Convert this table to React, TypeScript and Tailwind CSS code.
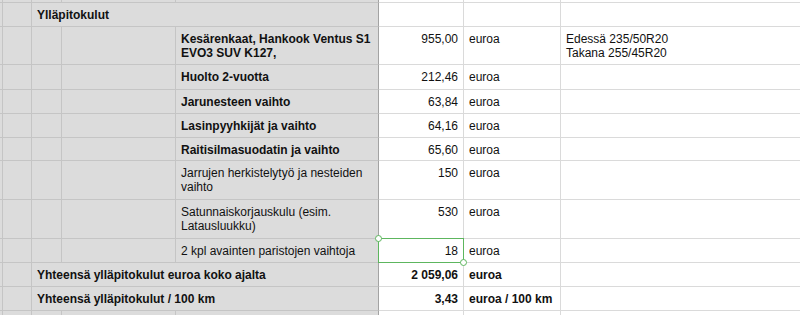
import React from 'react';

type Item = {
  label: string[];
  bold?: boolean;
  value: string;
  note?: string[];
  h: string;
  selected?: boolean;
};

const items: Item[] = [
  { label: ['Kesärenkaat, Hankook Ventus S1', 'EVO3 SUV K127,'], bold: true, value: '955,00', note: ['Edessä 235/50R20', 'Takana 255/45R20'], h: 'h-[38px]' },
  { label: ['Huolto 2-vuotta'], bold: true, value: '212,46', h: 'h-[25px]' },
  { label: ['Jarunesteen vaihto'], bold: true, value: '63,84', h: 'h-[24px]' },
  { label: ['Lasinpyyhkijät ja vaihto'], bold: true, value: '64,16', h: 'h-[24px]' },
  { label: ['Raitisilmasuodatin ja vaihto'], bold: true, value: '65,60', h: 'h-[23px]' },
  { label: ['Jarrujen herkistelytyö ja nesteiden', 'vaihto'], value: '150', h: 'h-[39px]' },
  { label: ['Satunnaiskorjauskulu (esim.', 'Latausluukku)'], value: '530', h: 'h-[39px]' },
  { label: ['2 kpl avainten paristojen vaihtoja'], value: '18', h: 'h-[24px]', selected: true },
];

// gray side cells
const g = 'bg-[#dcdcdc] border-r border-b border-[#c5c5c5]';
const gEdge = 'bg-[#dcdcdc] border-r border-b border-r-[#a3a3a3] border-b-[#c5c5c5]';
const w = 'bg-white border-r border-b border-[#dadada]';
const txt = 'pl-[5px] pr-[5px] pt-[5px] leading-[14px] whitespace-nowrap';

function Row({ h, children }: { h: string; children: React.ReactNode }) {
  return (
    <div className={`grid grid-cols-[3px_29px_30px_114px_203px_85px_97px_1fr] ${h}`}>
      {children}
    </div>
  );
}

function Handle({ className }: { className: string }) {
  return (
    <span
      className={`absolute w-[7px] h-[7px] rounded-full bg-white border border-[#5db65e] ${className}`}
    />
  );
}

export default function App() {
  return (
    <div
      className="w-[800px] h-[315px] overflow-hidden bg-white text-[12px] text-[#111]"
      style={{ fontFamily: '"Liberation Sans", Arial, sans-serif' }}
    >
      <Row h="h-[3px]">
        <div className={g} />
        <div className={g} />
        <div className={g} />
        <div className={g} />
        <div className={gEdge} />
        <div className={w} />
        <div className={w} />
        <div className="bg-white border-b border-[#dadada]" />
      </Row>

      <Row h="h-[24px]">
        <div className={g} />
        <div className={g} />
        <div className={`${gEdge} col-span-3 ${txt} font-bold`}>Ylläpitokulut</div>
        <div className={w} />
        <div className={w} />
        <div className="bg-white border-b border-[#dadada]" />
      </Row>

      {items.map((it, i) => (
        <Row key={i} h={it.h}>
          <div className={g} />
          <div className={g} />
          <div className={g} />
          <div className={g} />
          <div className={`${gEdge} ${txt} ${it.bold ? 'font-bold' : ''}`}>
            {it.label.map((l, j) => (
              <div key={j}>{l}</div>
            ))}
          </div>
          <div className={`${w} ${txt} text-right relative`}>
            {it.value}
            {it.selected && (
              <div className="absolute left-[-1px] top-[-1px] right-[-1px] bottom-[-1px] border border-[#5db65e]">
                <Handle className="left-[-4px] top-[-4px]" />
                <Handle className="right-[-4px] bottom-[-4px]" />
              </div>
            )}
          </div>
          <div className={`${w} ${txt}`}>euroa</div>
          <div className={`bg-white border-b border-[#dadada] ${txt}`}>
            {it.note?.map((n, j) => (
              <div key={j}>{n}</div>
            ))}
          </div>
        </Row>
      ))}

      <Row h="h-[24px]">
        <div className={g} />
        <div className={g} />
        <div className={`${gEdge} col-span-3 ${txt} font-bold`}>Yhteensä ylläpitokulut euroa koko ajalta</div>
        <div className={`${w} ${txt} text-right font-bold`}>2 059,06</div>
        <div className={`${w} ${txt} font-bold`}>euroa</div>
        <div className="bg-white border-b border-[#dadada]" />
      </Row>

      <Row h="h-[24px]">
        <div className={g} />
        <div className={g} />
        <div className={`${gEdge} col-span-3 ${txt} font-bold`}>Yhteensä ylläpitokulut / 100 km</div>
        <div className={`${w} ${txt} text-right font-bold`}>3,43</div>
        <div className={`${w} ${txt} font-bold`}>euroa / 100 km</div>
        <div className="bg-white border-b border-[#dadada]" />
      </Row>

      <Row h="h-[24px]">
        <div className={g} />
        <div className={g} />
        <div className={g} />
        <div className={g} />
        <div className={gEdge} />
        <div className={w} />
        <div className={w} />
        <div className="bg-white border-b border-[#dadada]" />
      </Row>
    </div>
  );
}
